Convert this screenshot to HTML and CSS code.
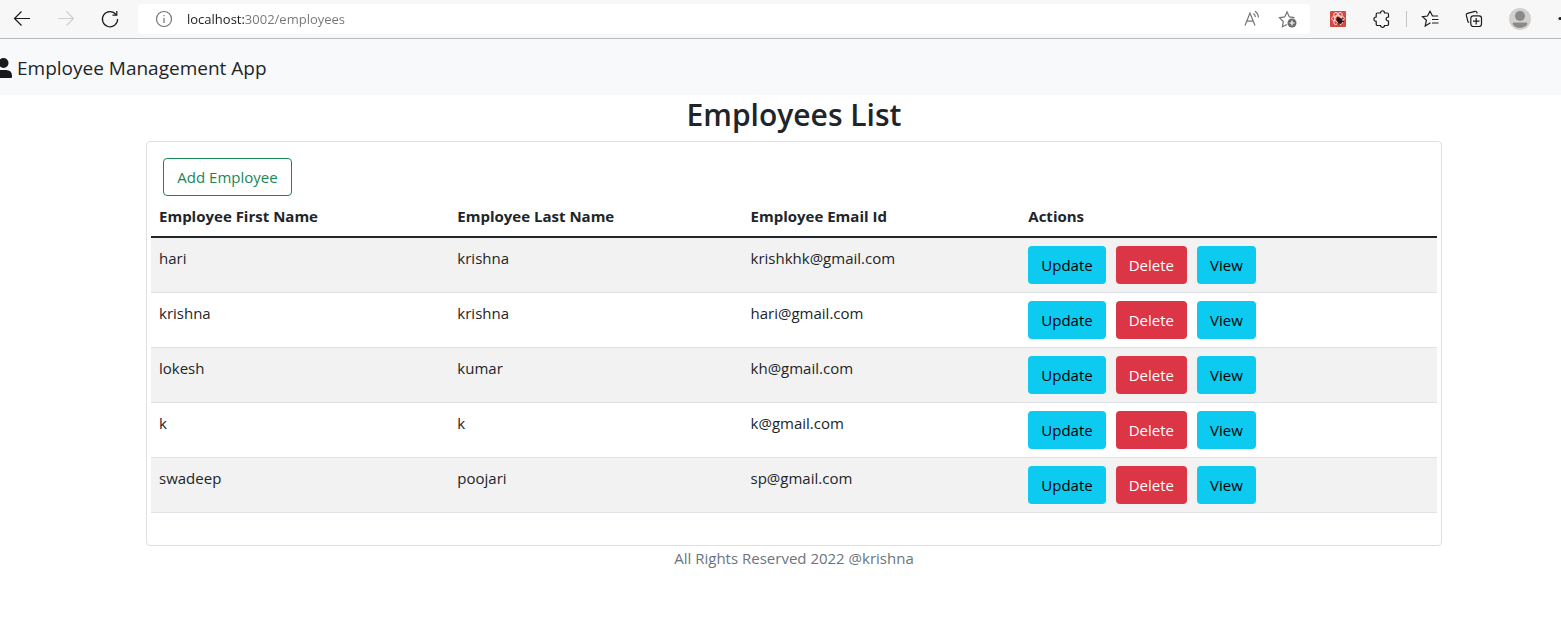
FILE: index.html
```html
<!DOCTYPE html>
<html lang="en">
<head>
<meta charset="utf-8">
<title>Employee Management App</title>
<link rel="stylesheet" href="styles.css">
</head>
<body>
<div class="toolbar">
  <div class="nav-buttons">
    <button class="icon-btn" type="button" aria-label="Back">
      <svg width="20" height="20" viewBox="0 0 20 20"><path d="M18 9.500H2.500M9.500 2.500l-7 7 7 7"/></svg>
    </button>
    <button class="icon-btn icon-disabled" type="button" aria-label="Forward" disabled>
      <svg width="20" height="20" viewBox="0 0 20 20"><path d="M2 9.500h15.500M10.500 2.500l7 7-7 7"/></svg>
    </button>
    <button class="icon-btn" type="button" aria-label="Reload">
      <svg width="20" height="20" viewBox="0 0 20 20"><path d="M16 5.500A7.600 7.600 0 1 0 17.600 10M16.800 2v4.200h-4.300"/></svg>
    </button>
  </div>
  <div class="address">
    <svg class="muted" width="18" height="18" viewBox="0 0 18 18"><circle cx="9" cy="9" r="7.500"/><path d="M9 8v5M9 5v1.300"/></svg>
    <input class="url" type="text" aria-label="Address" value="localhost:3002/employees">
    <button class="icon-btn muted" type="button" aria-label="Read aloud">
      <svg width="20" height="20" viewBox="0 0 20 20"><path d="M3 16.500L8 4l5 12.500M4.800 12.200h6.500M11.500 4.500c1.200.9 1.800 2 1.900 3.500M13 2.200c2.300 1.500 3.400 3.700 3.400 6.300"/></svg>
    </button>
    <button class="icon-btn muted" type="button" aria-label="Add to favorites">
      <svg width="20" height="20" viewBox="0 0 20 20"><path d="M9 15.500l-4.600 2.300.9-5.300L1.500 8.700l5.200-.8L9 3l2.400 4.900 5.200.8"/><circle class="solid" cx="14" cy="14" r="4.500"/><path class="plus" d="M14 11.500v5M11.500 14h5"/></svg>
    </button>
  </div>
  <div class="tools">
    <button class="icon-btn" type="button" aria-label="Extension">
      <svg width="20" height="18" viewBox="0 0 20 18"><rect class="red" x="2" y="1" width="16" height="16" rx="1"/><g class="atom"><ellipse cx="10" cy="8.500" rx="6.500" ry="2.700"/><ellipse cx="10" cy="8.500" rx="6.500" ry="2.700" transform="rotate(60 10 8.500)"/><ellipse cx="10" cy="8.500" rx="6.500" ry="2.700" transform="rotate(120 10 8.500)"/></g><ellipse class="bug" cx="11.500" cy="10.500" rx="2.500" ry="3.300" transform="rotate(-40 11.500 10.500)"/><path class="legs" d="M7.500 9l6 5M9.500 14l5-6M9 7l1 2M13 11l3 .5M11 12v3"/></svg>
    </button>
    <button class="icon-btn" type="button" aria-label="Extensions">
      <svg width="20" height="20" viewBox="0 0 20 20"><path d="M5.500 4h3c0-3 4-3 4 0h2.700q1.300 0 1.300 1.300V8c-3.200-.2-3.200 4.200 0 4v3.200q0 1.300-1.300 1.300h-2.700c0 2.500-4 2.500-4 0h-3q-1.300 0-1.300-1.300V12.300C1.200 12.300 1.200 8 4.200 8V5.300Q4.200 4 5.500 4z"/></svg>
    </button>
    <span class="divider"></span>
    <button class="icon-btn" type="button" aria-label="Favorites">
      <svg width="20" height="20" viewBox="0 0 20 20"><path d="M9.500 13.800l-5.300 3.200 1.200-5.700L1.500 7.600l5-.6L9 2.200 11.500 7H17M11 10.500h6.500M11 14h6.500"/></svg>
    </button>
    <button class="icon-btn" type="button" aria-label="Collections">
      <svg width="20" height="20" viewBox="0 0 20 20"><path d="M4.200 13.500L3 12.800 1.300 6.200Q1 4.700 2.400 4.300L10 2.300q1.400-.3 1.900 1.200l.3 1"/><rect x="5.800" y="6.800" width="10.700" height="10.700" rx="2.500"/><path d="M11.200 9v6.500M8 12.200h6.500"/></svg>
    </button>
    <button class="icon-btn profile" type="button" aria-label="Profile">
      <svg width="22" height="22" viewBox="0 0 22 22"><circle class="disc" cx="11" cy="11" r="11"/><circle class="person" cx="11" cy="8" r="5"/><path class="person" d="M3.500 16q0-1.500 1.500-1.500h12q1.500 0 1.500 1.500-2.500 4-7.500 4t-7.500-4z"/></svg>
    </button>
    <button class="icon-btn menu" type="button" aria-label="Settings">
      <svg width="4" height="20" viewBox="0 0 4 20"><circle class="dot" cx="3" cy="9.500" r="1.500"/></svg>
    </button>
  </div>
</div>
<header class="navbar">
  <a class="brand" href="#">
    <svg class="user" width="14" height="20" viewBox="0 0 14 20"><circle cx="3.500" cy="5" r="5"/><path d="M-6 20v-2q0-6 6-6h6q6 0 6 6v1q0 1-1 1z"/></svg>
    <span>Employee Management App</span>
  </a>
</header>
<main class="page">
  <div class="container">
    <h2 class="title">Employees List</h2>
    <section class="card">
      <button class="btn btn-outline" type="button">Add Employee</button>
      <table class="table">
        <colgroup><col class="col-first"><col class="col-last"><col class="col-email"><col></colgroup>
        <thead>
          <tr><th>Employee First Name</th><th>Employee Last Name</th><th>Employee Email Id</th><th>Actions</th></tr>
        </thead>
        <tbody>
          <tr><td>hari</td><td>krishna</td><td>krishkhk@gmail.com</td><td><div class="actions"><button class="btn btn-info" type="button">Update</button><button class="btn btn-danger" type="button">Delete</button><button class="btn btn-info" type="button">View</button></div></td></tr>
          <tr><td>krishna</td><td>krishna</td><td>hari@gmail.com</td><td><div class="actions"><button class="btn btn-info" type="button">Update</button><button class="btn btn-danger" type="button">Delete</button><button class="btn btn-info" type="button">View</button></div></td></tr>
          <tr><td>lokesh</td><td>kumar</td><td>kh@gmail.com</td><td><div class="actions"><button class="btn btn-info" type="button">Update</button><button class="btn btn-danger" type="button">Delete</button><button class="btn btn-info" type="button">View</button></div></td></tr>
          <tr><td>k</td><td>k</td><td>k@gmail.com</td><td><div class="actions"><button class="btn btn-info" type="button">Update</button><button class="btn btn-danger" type="button">Delete</button><button class="btn btn-info" type="button">View</button></div></td></tr>
          <tr><td>swadeep</td><td>poojari</td><td>sp@gmail.com</td><td><div class="actions"><button class="btn btn-info" type="button">Update</button><button class="btn btn-danger" type="button">Delete</button><button class="btn btn-info" type="button">View</button></div></td></tr>
        </tbody>
      </table>
    </section>
    <footer class="footer">All Rights Reserved 2022 @krishna</footer>
  </div>
</main>
</body>
</html>
```
FILE: styles.css
```css
* { box-sizing: border-box; }
body {
  margin: 0;
  background: #fff;
  color: #212529;
  font-family: "Segoe UI", "Open Sans", "Noto Sans", sans-serif;
  font-size: 15px;
  line-height: 24px;
}
button, input { font: inherit; }

.toolbar {
  display: flex;
  align-items: center;
  height: 39px;
  background: #f7f7f7;
  border-bottom: 1px solid #b9bbbe;
  overflow: hidden;
}
.nav-buttons { display: flex; gap: 24px; padding: 0 18px 0 12px; }
.icon-btn {
  display: flex;
  align-items: center;
  justify-content: center;
  flex: none;
  padding: 0;
  border: 0;
  background: none;
  color: #1b1b1b;
}
.toolbar svg { flex: none; fill: none; stroke: currentColor; stroke-width: 1.2; }
.toolbar .icon-disabled { color: #cfcfcf; }
.toolbar .muted { color: #737373; }
.address {
  display: flex;
  align-items: center;
  flex: 1;
  gap: 16px;
  height: 30px;
  padding: 0 12px 0 17px;
  background: #fff;
  border-radius: 4px;
}
.url {
  flex: 1;
  min-width: 0;
  margin-left: -2px;
  padding: 0;
  border: 0;
  outline: 0;
  font-size: 13px;
  color: transparent;
  background: linear-gradient(to right, #1b1b1b 57px, #757575 57px);
  background-clip: text;
  -webkit-background-clip: text;
}
.toolbar .solid { fill: #6b6b6b; stroke: none; }
.toolbar .plus { stroke: #fff; }
.toolbar .red { fill: #d6473f; stroke: none; }
.toolbar .atom { stroke: #f9dcd9; stroke-width: 1; }
.toolbar .bug { fill: #2b1413; stroke: none; }
.toolbar .legs { stroke: #2b1413; stroke-width: 1; }
.toolbar .disc { fill: #d2d0ce; stroke: none; }
.toolbar .person { fill: #8c8a88; stroke: none; }
.toolbar .dot { fill: #1b1b1b; stroke: none; }
.tools { display: flex; align-items: center; gap: 24px; padding-left: 18px; }
.tools .divider { width: 1px; height: 16px; margin: 0 -10px; background: #c4c4c4; }
.tools .menu { margin-left: 2px; }

.navbar { display: flex; align-items: center; height: 56px; padding-top: 2px; background: #f8f9fa; }
.brand {
  display: flex;
  align-items: center;
  gap: 3px;
  color: #212529;
  font-size: 19px;
  line-height: 30px;
  text-decoration: none;
}
.user { fill: #17191c; }

.page { padding-left: 27px; }
.container { max-width: 1320px; margin: 0 auto; padding: 0 12px; }
.title {
  margin: 0 0 6px;
  font-size: 30px;
  font-weight: 600;
  line-height: 40px;
  text-align: center;
}
.card { padding: 16px 4px; border: 1px solid #dfdfdf; border-radius: 4px; }
.btn {
  padding: 6px 12px;
  border: 1px solid transparent;
  border-radius: 4px;
  line-height: 24px;
}
.btn-outline { display: block; min-width: 129px; margin-left: 12px; border-color: #198754; background: #fff; color: #198754; }
.btn-info { background: #0dcaf0; color: #000; }
.btn-danger { background: #dc3545; color: #fff; }
.table { width: 100%; margin-bottom: 16px; border-collapse: collapse; table-layout: fixed; }
.col-first { width: 23.2%; }
.col-last { width: 22.8%; }
.col-email { width: 21.6%; }
.table th, .table td { padding: 8px; text-align: left; vertical-align: top; }
.table th { border-bottom: 2px solid #212529; font-weight: 700; }
.table td { border-bottom: 1px solid #dee2e6; }
.table tbody tr:nth-child(odd) { background: #f2f2f2; }
.actions { display: flex; gap: 10px; }
.footer { color: #6c757d; text-align: center; }
```
